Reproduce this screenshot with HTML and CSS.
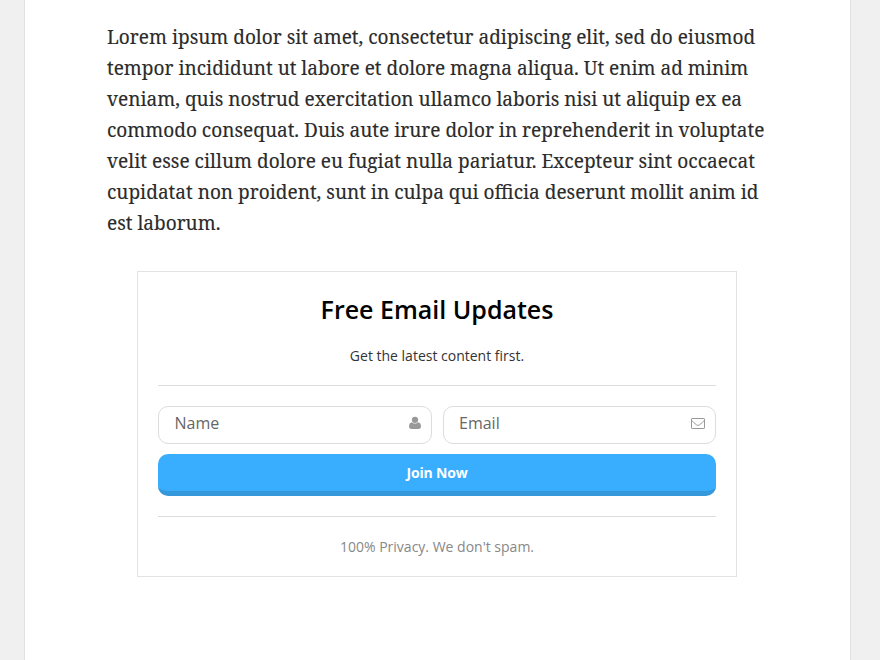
FILE: index.html
```html
<!DOCTYPE html>
<html lang="en">
<head>
<meta charset="utf-8">
<title>Free Email Updates</title>
<link rel="stylesheet" href="styles.css">
</head>
<body>
<main class="page">
  <p class="copy">
    <span class="line">Lorem ipsum dolor sit amet, consectetur adipiscing elit, sed do eiusmod</span>
    <span class="line">tempor incididunt ut labore et dolore magna aliqua. Ut enim ad minim</span>
    <span class="line">veniam, quis nostrud exercitation ullamco laboris nisi ut aliquip ex ea</span>
    <span class="line">commodo consequat. Duis aute irure dolor in reprehenderit in voluptate</span>
    <span class="line line-loose">velit esse cillum dolore eu fugiat nulla pariatur. Excepteur sint occaecat</span>
    <span class="line">cupidatat non proident, sunt in culpa qui officia deserunt mollit anim id</span>
    <span class="line">est laborum.</span>
  </p>
  <section class="optin">
    <h2 class="title">Free Email Updates</h2>
    <p class="subtitle">Get the latest content first.</p>
    <form class="form">
      <div class="fields">
        <div class="field"><span>Name</span>
          <svg class="user" width="12" height="14" viewBox="0 0 12 14"><path d="M6 .7a3.1 3.1 0 1 1 0 6.3a3.1 3.1 0 0 1 0-6.3zM3 6.2C1 6.3 0 8.2 0 10.6C0 12.2 1 13 2.4 13h7.2c1.400 0 2.400-.8 2.400-2.400C12 8.200 11 6.300 9 6.200C7.500 7.900 4.500 7.900 3 6.200z"/></svg>
        </div>
        <div class="field"><span>Email</span>
          <svg class="mail" width="14" height="11" viewBox="0 0 14 11"><rect x=".5" y=".5" width="13" height="10" rx=".6"/><path d="M.7 2.400C2 4 3.600 5.300 5.300 6.700c1.100.9 2.300.9 3.400 0C10.400 5.300 12 4 13.300 2.400"/></svg>
        </div>
      </div>
      <button class="join" type="button">Join Now</button>
    </form>
    <p class="privacy">100% Privacy. We don't spam.</p>
  </section>
</main>
</body>
</html>
```
FILE: styles.css
```css
* { box-sizing: border-box; }
body { margin: 0; background: #f0f0f0; font-family: "Open Sans", sans-serif; }
.page { width: 827px; height: 660px; margin-left: 24px; padding: 21px 82px 0; background: #fff; border: solid #e2e2e2; border-width: 0 1px; overflow: hidden; }
/* Narrowed serif for the article text */
.copy { margin: 0; font: 20px/31px "Noto Serif", "Droid Serif", "DejaVu Serif", serif; color: #2b2b2b; -webkit-text-stroke: .15px #2b2b2b; transform: scaleX(.951); transform-origin: 0 0; }
.line { display: block; white-space: nowrap; }
.line-loose { letter-spacing: .03px; }
.optin { width: 600px; height: 306px; margin: 33px 0 0 30px; padding: 19px 20px 20px; border: 1px solid #e3e3e3; text-align: center; }
.title { margin: 0; font-size: 25px; line-height: 36px; font-weight: 600; color: #000; }
.subtitle { margin: 18px 0 0; font-size: 14px; line-height: 22px; color: #333; }
.form { margin: 18px 0 0; padding: 20px 0; border: solid #ddd; border-width: 1px 0; }
.fields { display: flex; gap: 11px; }
.field { flex: 1; display: flex; justify-content: space-between; align-items: center; height: 38px; padding: 0 10px 5px 15.5px; border: 1px solid #ddd; border-radius: 10px; font-size: 16px; color: #666; }
.user { fill: #999; }
.mail { fill: none; stroke: #999; margin-top: 1px; }
.join { display: block; width: 100%; height: 42px; margin: 10px 0 0; padding: 0; border: 0; border-bottom: 5px solid #3498db; border-radius: 10px; background: #39aeff; color: #fff; font: 700 14px/37px "Open Sans", sans-serif; letter-spacing: -.2px; }
.privacy { margin: 19px 0 0; font-size: 14px; line-height: 22px; color: #888; }
```
